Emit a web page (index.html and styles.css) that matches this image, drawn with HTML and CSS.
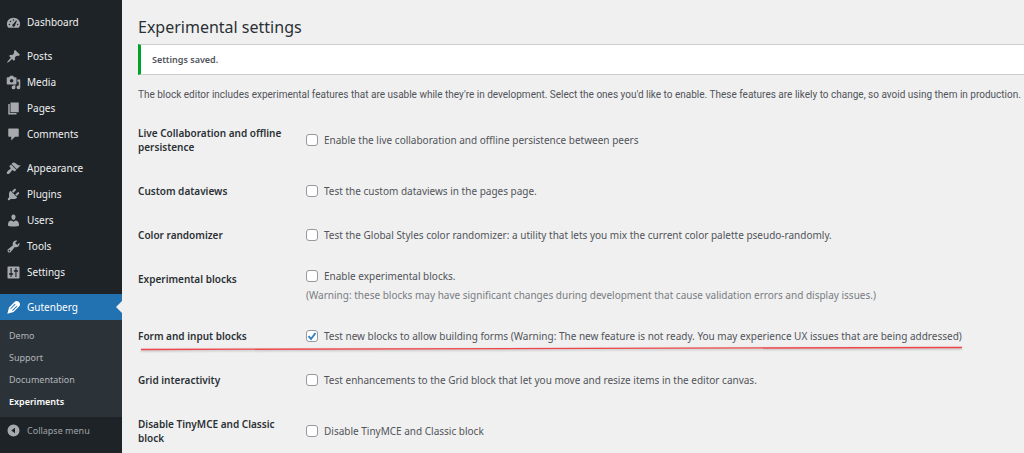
FILE: index.html
```html
<!DOCTYPE html>
<html lang="en">
<head>
<meta charset="utf-8">
<title>Experimental settings</title>
<link rel="stylesheet" href="styles.css">
</head>
<body>
<div class="layout">
  <nav class="sidebar" aria-label="Main menu">
    <ul class="menu">
      <li><a class="menu-item" href="#"><svg class="icon" viewBox="0 0 20 20"><path fill-rule="evenodd" d="M3.2 17h13.600c1.300-1.370 2-3.110 2-5 0-4.800-3.900-8.500-8.800-8.500S1.200 7.200 1.200 12c0 1.890.7 3.630 2 5zM10 5.500a1 1 0 1 1 0 2 1 1 0 0 1 0-2zM6 7.500a1 1 0 1 1 0 2 1 1 0 0 1 0-2zm7.400-.300l1.200.600-2.400 5.500c.2 1.100-.7 2.100-1.700 2.200-1.200.1-2.200-.9-2.100-2 .1-.9.700-1.500 1.500-1.700zM4.500 11.500a1 1 0 1 1 0 2 1 1 0 0 1 0-2zm11 0a1 1 0 1 1 0 2 1 1 0 0 1 0-2z"/></svg>Dashboard</a></li>
    </ul>
    <ul class="menu">
      <li><a class="menu-item" href="#"><svg class="icon" viewBox="0 0 20 20"><path d="M10.44 3.02l1.82-1.82 6.36 6.35-1.83 1.82c-1.05-.68-2.48-.57-3.41.36l-.75.75c-.92.93-1.04 2.35-.35 3.41l-1.83 1.82-2.41-2.41-2.8 2.79c-.42.42-3.38 2.71-3.8 2.29s1.86-3.39 2.28-3.81l2.79-2.79L4.1 9.36l1.83-1.82c1.05.69 2.48.57 3.4-.36l.75-.75c.93-.92 1.05-2.35.36-3.41z"/></svg>Posts</a></li>
      <li><a class="menu-item" href="#"><svg class="icon" viewBox="0 0 20 20"><path fill-rule="evenodd" d="M14 11.500V4c0-.55-.45-1-1-1h-2.200L9.500 1h-4L4.200 3H2c-.55 0-1 .45-1 1v7.500c0 .55.45 1 1 1h11c.55 0 1-.45 1-1zM7.500 5.300a2.400 2.400 0 1 1 0 4.800 2.400 2.400 0 0 1 0-4.800z"/><path d="M15 6h4v10.500a2.500 2.500 0 1 1-2-2.450V9h-2zM10 13.500h2.500v3a2.500 2.500 0 1 1-2.500-2.450z"/></svg>Media</a></li>
      <li><a class="menu-item" href="#"><svg class="icon" viewBox="0 0 20 20"><path d="M6 15V2h11v13H6zm-1 1h9v2H3V4h2v12z"/></svg>Pages</a></li>
      <li><a class="menu-item" href="#"><svg class="icon" viewBox="0 0 20 20"><path d="M4 2h12c.6 0 1 .4 1 1v9c0 .6-.4 1-1 1h-4l-5 5v-5H4c-.6 0-1-.4-1-1V3c0-.6.4-1 1-1z"/></svg>Comments</a></li>
    </ul>
    <ul class="menu">
      <li><a class="menu-item" href="#"><svg class="icon" viewBox="0 0 20 20"><path d="M14.48 11.06L7.41 3.99l1.5-1.5c.5-.56 2.3-.47 3.51.32 1.21.8 1.43 1.28 2.91 2.1 1.18.64 2.45 1.26 4.45.85zm-.71.71L6.7 4.7 4.93 6.47c-.39.39-.39 1.02 0 1.41l1.06 1.06c.39.39.39 1.03 0 1.42-.6.6-1.43 1.11-2.21 1.69-.35.26-.7.53-1.01.84C1.43 14.23.4 16.08 1.4 17.07c.99 1 2.84-.03 4.18-1.36.31-.31.58-.66.85-1.02.57-.78 1.08-1.61 1.69-2.21.39-.39 1.02-.39 1.41 0l1.06 1.06c.39.39 1.02.39 1.41 0z"/></svg>Appearance</a></li>
      <li><a class="menu-item" href="#"><svg class="icon" viewBox="0 0 20 20"><path d="M13.11 4.36L9.87 7.6 8 5.73l3.24-3.24c.35-.34 1.05-.2 1.56.32.52.51.66 1.21.31 1.55zm-8 1.77l.91-1.12 9.01 9.01-1.19.84c-.71.71-2.63 1.16-3.82 1.16H6.14L4.9 17.26c-.59.59-1.54.59-2.12 0-.59-.58-.59-1.53 0-2.12l1.24-1.24v-3.88c0-1.13.4-3.19 1.09-3.89zm7.26 3.97l3.24-3.24c.34-.35 1.04-.21 1.55.31.52.51.66 1.21.31 1.55l-3.24 3.25z"/></svg>Plugins</a></li>
      <li><a class="menu-item" href="#"><svg class="icon" viewBox="0 0 20 20"><path d="M10 9.25c-2.27 0-2.73-3.44-2.73-3.44C7 4.02 7.82 2 9.97 2c2.16 0 2.98 2.02 2.71 3.81 0 0-.41 3.44-2.68 3.44zm0 2.57L12.72 10c2.39 0 4.52 2.33 4.52 4.53v2.49s-3.65 1.13-7.24 1.13c-3.65 0-7.24-1.13-7.24-1.13v-2.49c0-2.25 1.94-4.48 4.47-4.48z"/></svg>Users</a></li>
      <li><a class="menu-item" href="#"><svg class="icon" viewBox="0 0 20 20"><path d="M16.68 9.77c-1.34 1.34-3.3 1.67-4.95.99l-5.41 6.52c-.99.99-2.59.99-3.58 0s-.99-2.59 0-3.57l6.52-5.42c-.68-1.65-.35-3.61.99-4.95 1.28-1.28 3.12-1.62 4.72-1.06l-2.89 2.89 2.82 2.82 2.86-2.87c.53 1.58.18 3.39-1.08 4.65zM3.81 16.21c.4.39 1.04.39 1.43 0 .4-.4.4-1.04 0-1.43-.39-.4-1.03-.4-1.43 0-.39.39-.39 1.03 0 1.43z"/></svg>Tools</a></li>
      <li><a class="menu-item" href="#"><svg class="icon" viewBox="0 0 20 20"><path fill-rule="evenodd" d="M18 17V3c0-.6-.4-1-1-1H3c-.6 0-1 .4-1 1v14c0 .6.4 1 1 1h14c.6 0 1-.4 1-1zM6 4h1.500v7H9.500v2h-2v3H6v-3H4v-2h2zm6.500 0H14v3h2v2h-2v7h-1.500V9h-2V7h2z"/></svg>Settings</a></li>
    </ul>
    <ul class="menu menu-last">
      <li>
        <a class="menu-item is-current" href="#"><svg class="icon" viewBox="0 0 20 20"><path fill-rule="evenodd" d="M17.300 2.700c-2-2-4.200-1.900-5.700-.4L4 10 1.800 18.200 10 16l7.700-7.600c1.500-1.500 1.600-3.700-.4-5.700zM11.800 5l.9.900-6.200 6.200-.9-.9zM14.300 7.500l.9.900L9 14.600l-.9-.9z"/></svg>Gutenberg</a>
        <ul class="submenu">
          <li><a class="submenu-item" href="#">Demo</a></li>
          <li><a class="submenu-item" href="#">Support</a></li>
          <li><a class="submenu-item" href="#">Documentation</a></li>
          <li><a class="submenu-item is-active" href="#">Experiments</a></li>
        </ul>
      </li>
    </ul>
    <button class="menu-item collapse" type="button"><svg class="icon" viewBox="0 0 20 20"><path fill-rule="evenodd" d="M10 2a8 8 0 1 1 0 16 8 8 0 0 1 0-16zm2 4.200L7 10l5 3.800z"/></svg>Collapse menu</button>
  </nav>

  <main class="content">
    <h1 class="title">Experimental settings</h1>
    <div class="notice" role="status"><strong>Settings saved.</strong></div>
    <p class="intro">The block editor includes experimental features that are usable while they're in development. Select the ones you'd like to enable. These features are likely to change, so avoid using them in production.</p>
    <form>
      <table class="form-table">
        <tr>
          <th scope="row">Live Collaboration and offline persistence</th>
          <td><label class="option"><input class="check" type="checkbox">Enable the live collaboration and offline persistence between peers</label></td>
        </tr>
        <tr>
          <th scope="row">Custom dataviews</th>
          <td><label class="option"><input class="check" type="checkbox">Test the custom dataviews in the pages page.</label></td>
        </tr>
        <tr>
          <th scope="row">Color randomizer</th>
          <td><label class="option"><input class="check" type="checkbox">Test the Global Styles color randomizer: a utility that lets you mix the current color palette pseudo-randomly.</label></td>
        </tr>
        <tr>
          <th scope="row">Experimental blocks</th>
          <td><label class="option"><input class="check" type="checkbox">Enable experimental blocks.</label><p class="hint">(Warning: these blocks may have significant changes during development that cause validation errors and display issues.)</p></td>
        </tr>
        <tr class="marked">
          <th scope="row">Form and input blocks</th>
          <td><label class="option"><input class="check" type="checkbox" checked>Test new blocks to allow building forms (Warning: The new feature is not ready. You may experience UX issues that are being addressed)</label><svg class="underline" viewBox="0 0 821 6" preserveAspectRatio="none"><path d="M0 3.500L821 1.500"/></svg></td>
        </tr>
        <tr>
          <th scope="row">Grid interactivity</th>
          <td><label class="option"><input class="check" type="checkbox">Test enhancements to the Grid block that let you move and resize items in the editor canvas.</label></td>
        </tr>
        <tr>
          <th scope="row">Disable TinyMCE and Classic block</th>
          <td><label class="option"><input class="check" type="checkbox">Disable TinyMCE and Classic block</label></td>
        </tr>
      </table>
    </form>
  </main>
</div>
</body>
</html>
```
FILE: styles.css
```css
* { box-sizing: border-box; }

body {
  margin: 0;
  background: #f0f0f0;
  color: #50545a;
  font: 10px/14px "Noto Sans", "Open Sans", sans-serif;
}

.layout {
  display: grid;
  grid-template-columns: 122px minmax(0, 1fr);
  min-height: 100vh;
}

.sidebar {
  background: #1d2327;
  padding-top: 9px;
}

.menu, .submenu {
  list-style: none;
  margin: 0;
  padding: 0;
}

.menu { margin-bottom: 8px; }

.menu-last {
  margin-top: 9px;
  margin-bottom: 0;
}

.menu-item {
  position: relative;
  display: flex;
  align-items: center;
  gap: 6px;
  width: 100%;
  height: 26px;
  padding: 0 6px;
  color: #f0f0f1;
  font-size: 10px;
  text-decoration: none;
}

.icon {
  flex: none;
  width: 15px;
  height: 15px;
  fill: #a7aaad;
}

.is-current {
  background: #2271b1;
  color: #fff;
}

.is-current .icon { fill: #fff; }

.is-current::after {
  content: "";
  position: absolute;
  right: 0;
  top: 7px;
  border: 6px solid transparent;
  border-right-color: #f0f0f0;
  border-left: 0;
}

.submenu {
  background: #2c3338;
  padding: 5px 0 4px;
}

.submenu-item {
  display: block;
  padding: 0 9px;
  color: #b2b5b8;
  font-size: 9px;
  line-height: 22px;
  text-decoration: none;
}

.is-active {
  color: #fff;
  font-weight: 600;
}

.collapse {
  border: 0;
  background: none;
  color: #a0a4a8;
  font-family: inherit;
  font-size: 9px;
  text-align: left;
}

.content { padding: 16px 0 0 16px; }

.title {
  margin: 0 0 6px;
  color: #2b3035;
  font-size: 16px;
  font-weight: 400;
  line-height: 22px;
}

.notice {
  padding: 8px 11px 7px;
  border: 1px solid #cbcccf;
  border-right: 0;
  border-left: 3px solid #00a32a;
  background: #fff;
  font-size: 9px;
}

.notice strong { font-weight: 600; }

.intro {
  margin: 13px 0 9px;
  font-family: Roboto, "Noto Sans", sans-serif;
}

.form-table {
  width: 100%;
  border-collapse: collapse;
}

.form-table th {
  width: 168px;
  padding: 15px 12px 15px 0;
  color: #2b3035;
  font-weight: 600;
  text-align: left;
  vertical-align: top;
}

.form-table td { padding: 11px 8px 11px 0; }

.option {
  display: flex;
  align-items: center;
  gap: 6px;
  line-height: 16px;
}

.check {
  appearance: none;
  flex: none;
  width: 12px;
  height: 12px;
  margin: 0;
  border: 1px solid #96999e;
  border-radius: 3px;
  background: #fff;
}

.check:checked {
  background: #fff url("data:image/svg+xml,%3Csvg xmlns='http://www.w3.org/2000/svg' viewBox='0 0 10 10'%3E%3Cpath d='M1.500 5.200L4 8 8.500 2' fill='none' stroke='%233582c4' stroke-width='2'/%3E%3C/svg%3E") center / 10px 10px no-repeat;
}

.hint {
  margin: 4px 0 0;
  color: #787c82;
  line-height: 15px;
}

.marked { position: relative; }

.underline {
  position: absolute;
  left: 3px;
  top: 32px;
  width: 821px;
  height: 6px;
  fill: none;
  stroke: #f0464b;
  stroke-width: 1.300;
  overflow: visible;
  filter: drop-shadow(0 1px 1px #00000044);
}
```
